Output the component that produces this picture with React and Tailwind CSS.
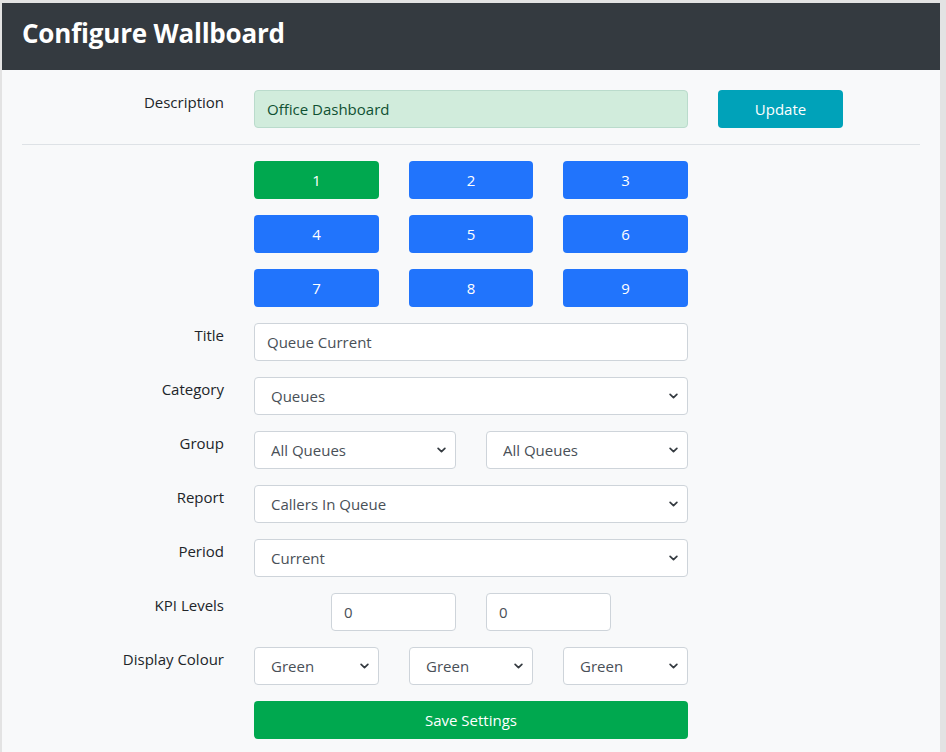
const font = { fontFamily: '"Open Sans", "Noto Sans", sans-serif' };

const Chevron = () => (
  <svg className="pointer-events-none absolute right-[10px] top-1/2 -translate-y-1/2 h-[6px] w-[9px]" viewBox="0 0 16 10" fill="none">
    <path d="M2 2l6 6 6-6" stroke="#343a40" strokeWidth="3" strokeLinecap="round" strokeLinejoin="round" />
  </svg>
);

const Select = ({ value, className = '' }) => (
  <div className={`relative ${className}`}>
    <select
      defaultValue={value}
      className="w-full h-[38px] appearance-none bg-white border border-[#ced4da] rounded-[4px] pl-4 pr-8 text-[15px] text-[#495057] outline-none"
    >
      <option>{value}</option>
    </select>
    <Chevron />
  </div>
);

const TextInput = ({ value, className = '' }) => (
  <input
    type="text"
    defaultValue={value}
    className={`h-[38px] bg-white border border-[#ced4da] rounded-[4px] px-[12px] text-[15px] text-[#495057] outline-none ${className}`}
  />
);

const Row = ({ label, children }) => (
  <div className="flex items-start">
    <div className="w-[222px] pt-[1px] text-right text-[15px] text-[#212529]">{label}</div>
    <div className="ml-[30px] w-[434px]">{children}</div>
  </div>
);

export default function App() {
  const tiles = [1, 2, 3, 4, 5, 6, 7, 8, 9];

  return (
    <div className="min-h-[752px] bg-[#e3e3e3] pt-[3px] pl-[2px] pr-[6px]" style={font}>
      <div className="bg-[#f8f9fa] min-h-[749px]">
        <div className="bg-[#343a40] h-[67px] flex items-center px-[20px] pb-[6px]">
          <h2 className="text-white text-[26px] font-bold tracking-[-0.2px]">Configure Wallboard</h2>
        </div>

        <div className="pt-[20px]">
          <div className="flex items-start">
            <div className="w-[222px] pt-[1px] text-right text-[15px] text-[#212529]">Description</div>
            <input
              type="text"
              defaultValue="Office Dashboard"
              className="ml-[30px] w-[434px] h-[38px] bg-[#d1ecdc] border border-[#badbcc] rounded-[4px] px-[12px] text-[15px] text-[#0f5132] outline-none"
            />
            <button className="ml-[30px] w-[125px] h-[38px] bg-[#00a2b9] rounded-[4px] text-white text-[15px]">Update</button>
          </div>

          <hr className="mx-[20px] mt-[16px] border-t border-[#dee2e6]" />

          <div className="pl-[252px] pr-[20px] pt-[16px]">
            <div className="grid grid-cols-[125px_124px_125px] gap-x-[30px] gap-y-[16px] w-[434px]">
              {tiles.map((n) => (
                <button
                  key={n}
                  className={`h-[38px] rounded-[4px] text-white text-[15px] ${n === 1 ? 'bg-[#00a84f]' : 'bg-[#2174fc]'}`}
                >
                  {n}
                </button>
              ))}
            </div>
          </div>

          <div className="mt-[16px] flex flex-col gap-[16px]">
            <Row label="Title">
              <TextInput value="Queue Current" className="w-full" />
            </Row>
            <Row label="Category">
              <Select value="Queues" />
            </Row>
            <Row label="Group">
              <div className="grid grid-cols-2 gap-[30px]">
                <Select value="All Queues" />
                <Select value="All Queues" />
              </div>
            </Row>
            <Row label="Report">
              <Select value="Callers In Queue" />
            </Row>
            <Row label="Period">
              <Select value="Current" />
            </Row>
            <Row label="KPI Levels">
              <div className="flex justify-center gap-[30px]">
                <TextInput value="0" className="w-[125px]" />
                <TextInput value="0" className="w-[125px]" />
              </div>
            </Row>
            <Row label="Display Colour">
              <div className="grid grid-cols-[125px_124px_125px] gap-x-[30px]">
                <Select value="Green" />
                <Select value="Green" />
                <Select value="Green" />
              </div>
            </Row>
            <Row label="">
              <button className="w-full h-[38px] bg-[#00a84f] rounded-[4px] text-white text-[15px]">Save Settings</button>
            </Row>
          </div>
        </div>
      </div>
    </div>
  );
}
